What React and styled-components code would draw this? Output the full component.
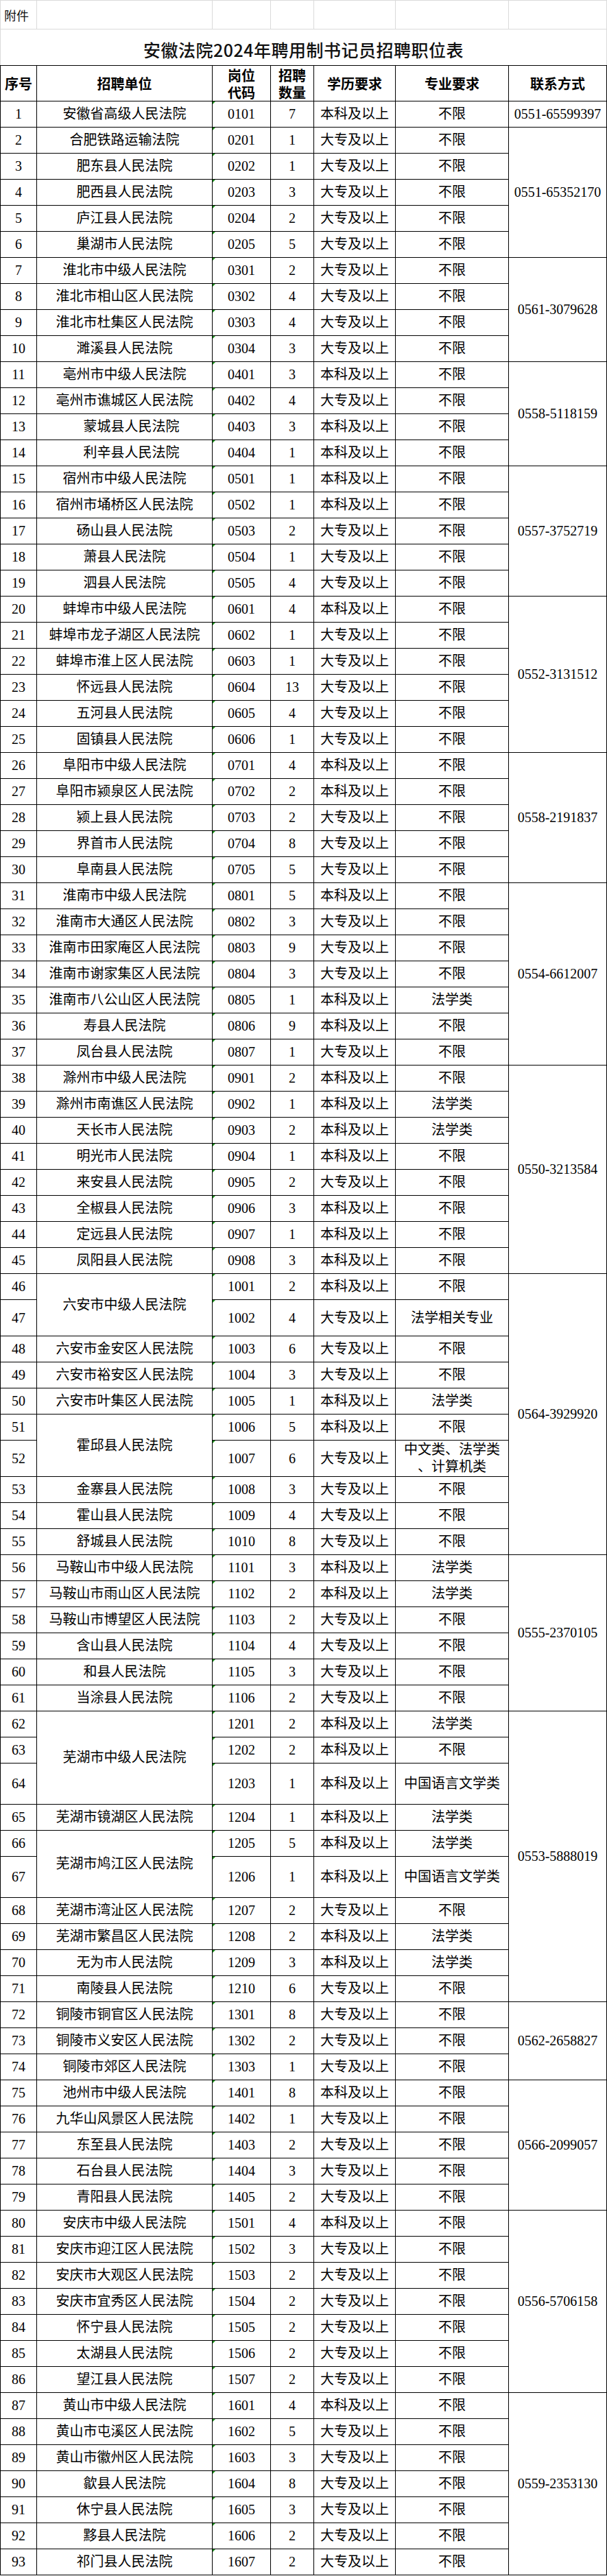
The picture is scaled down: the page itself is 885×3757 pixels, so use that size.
import React from "react";
import styled, { createGlobalStyle, css } from "styled-components";

const GlobalStyle = createGlobalStyle`
  html, body {
    margin: 0;
    padding: 0;
    background: #ffffff;
  }
`;

// column widths, summed to the 885px page
const COLS = [54, 256, 85, 63, 119, 165, 143];

const EDU = { 本: "本科及以上", 大: "大专及以上" };

// [unit, code, count, edu, major] — unit null where the cell above is merged down
const ROWS = [
  ["安徽省高级人民法院", "0101", "7", "本", "不限"],
  ["合肥铁路运输法院", "0201", "1", "大", "不限"],
  ["肥东县人民法院", "0202", "1", "大", "不限"],
  ["肥西县人民法院", "0203", "3", "大", "不限"],
  ["庐江县人民法院", "0204", "2", "大", "不限"],
  ["巢湖市人民法院", "0205", "5", "大", "不限"],
  ["淮北市中级人民法院", "0301", "2", "大", "不限"],
  ["淮北市相山区人民法院", "0302", "4", "大", "不限"],
  ["淮北市杜集区人民法院", "0303", "4", "大", "不限"],
  ["濉溪县人民法院", "0304", "3", "大", "不限"],
  ["亳州市中级人民法院", "0401", "3", "本", "不限"],
  ["亳州市谯城区人民法院", "0402", "4", "大", "不限"],
  ["　蒙城县人民法院", "0403", "3", "本", "不限"],
  ["　利辛县人民法院", "0404", "1", "本", "不限"],
  ["宿州市中级人民法院", "0501", "1", "本", "不限"],
  ["宿州市埇桥区人民法院", "0502", "1", "本", "不限"],
  ["砀山县人民法院", "0503", "2", "大", "不限"],
  ["萧县人民法院", "0504", "1", "大", "不限"],
  ["泗县人民法院", "0505", "4", "大", "不限"],
  ["蚌埠市中级人民法院", "0601", "4", "本", "不限"],
  ["蚌埠市龙子湖区人民法院", "0602", "1", "大", "不限"],
  ["蚌埠市淮上区人民法院", "0603", "1", "大", "不限"],
  ["怀远县人民法院", "0604", "13", "大", "不限"],
  ["五河县人民法院", "0605", "4", "大", "不限"],
  ["固镇县人民法院", "0606", "1", "大", "不限"],
  ["阜阳市中级人民法院", "0701", "4", "本", "不限"],
  ["阜阳市颍泉区人民法院", "0702", "2", "本", "不限"],
  ["颍上县人民法院", "0703", "2", "大", "不限"],
  ["界首市人民法院", "0704", "8", "大", "不限"],
  ["阜南县人民法院", "0705", "5", "大", "不限"],
  ["淮南市中级人民法院", "0801", "5", "本", "不限"],
  ["淮南市大通区人民法院", "0802", "3", "大", "不限"],
  ["淮南市田家庵区人民法院", "0803", "9", "大", "不限"],
  ["淮南市谢家集区人民法院", "0804", "3", "大", "不限"],
  ["淮南市八公山区人民法院", "0805", "1", "本", "法学类"],
  ["寿县人民法院", "0806", "9", "本", "不限"],
  ["凤台县人民法院", "0807", "1", "大", "不限"],
  ["滁州市中级人民法院", "0901", "2", "本", "不限"],
  ["滁州市南谯区人民法院", "0902", "1", "本", "法学类"],
  ["天长市人民法院", "0903", "2", "本", "法学类"],
  ["明光市人民法院", "0904", "1", "本", "不限"],
  ["来安县人民法院", "0905", "2", "大", "不限"],
  ["全椒县人民法院", "0906", "3", "本", "不限"],
  ["定远县人民法院", "0907", "1", "本", "不限"],
  ["凤阳县人民法院", "0908", "3", "本", "不限"],
  ["六安市中级人民法院", "1001", "2", "本", "不限"],
  [null, "1002", "4", "大", "法学相关专业"],
  ["六安市金安区人民法院", "1003", "6", "大", "不限"],
  ["六安市裕安区人民法院", "1004", "3", "大", "不限"],
  ["六安市叶集区人民法院", "1005", "1", "本", "法学类"],
  ["霍邱县人民法院", "1006", "5", "本", "不限"],
  [null, "1007", "6", "大", "中文类、法学类\n、计算机类"],
  ["金寨县人民法院", "1008", "3", "大", "不限"],
  ["霍山县人民法院", "1009", "4", "大", "不限"],
  ["舒城县人民法院", "1010", "8", "大", "不限"],
  ["马鞍山市中级人民法院", "1101", "3", "本", "法学类"],
  ["马鞍山市雨山区人民法院", "1102", "2", "本", "法学类"],
  ["马鞍山市博望区人民法院", "1103", "2", "大", "不限"],
  ["含山县人民法院", "1104", "4", "大", "不限"],
  ["和县人民法院", "1105", "3", "大", "不限"],
  ["当涂县人民法院", "1106", "2", "大", "不限"],
  ["芜湖市中级人民法院", "1201", "2", "本", "法学类"],
  [null, "1202", "2", "本", "不限"],
  [null, "1203", "1", "本", "中国语言文学类"],
  ["芜湖市镜湖区人民法院", "1204", "1", "本", "法学类"],
  ["芜湖市鸠江区人民法院", "1205", "5", "本", "法学类"],
  [null, "1206", "1", "本", "中国语言文学类"],
  ["芜湖市湾沚区人民法院", "1207", "2", "大", "不限"],
  ["芜湖市繁昌区人民法院", "1208", "2", "本", "法学类"],
  ["无为市人民法院", "1209", "3", "本", "法学类"],
  ["南陵县人民法院", "1210", "6", "大", "不限"],
  ["铜陵市铜官区人民法院", "1301", "8", "大", "不限"],
  ["铜陵市义安区人民法院", "1302", "2", "大", "不限"],
  ["铜陵市郊区人民法院", "1303", "1", "大", "不限"],
  ["池州市中级人民法院", "1401", "8", "本", "不限"],
  ["九华山风景区人民法院", "1402", "1", "大", "不限"],
  ["东至县人民法院", "1403", "2", "大", "不限"],
  ["石台县人民法院", "1404", "3", "大", "不限"],
  ["青阳县人民法院", "1405", "2", "大", "不限"],
  ["安庆市中级人民法院", "1501", "4", "本", "不限"],
  ["安庆市迎江区人民法院", "1502", "3", "大", "不限"],
  ["安庆市大观区人民法院", "1503", "2", "大", "不限"],
  ["安庆市宜秀区人民法院", "1504", "2", "大", "不限"],
  ["怀宁县人民法院", "1505", "2", "大", "不限"],
  ["太湖县人民法院", "1506", "2", "大", "不限"],
  ["望江县人民法院", "1507", "2", "大", "不限"],
  ["黄山市中级人民法院", "1601", "4", "本", "不限"],
  ["黄山市屯溪区人民法院", "1602", "5", "大", "不限"],
  ["黄山市徽州区人民法院", "1603", "3", "大", "不限"],
  ["歙县人民法院", "1604", "8", "大", "不限"],
  ["休宁县人民法院", "1605", "3", "大", "不限"],
  ["黟县人民法院", "1606", "2", "大", "不限"],
  ["祁门县人民法院", "1607", "2", "大", "不限"],
];

// merged unit cells: row number -> rows spanned
const UNIT_SPANS = { 46: 2, 51: 2, 62: 3, 66: 2 };

// taller rows
const TALL = { 47: 53, 52: 53, 64: 60, 67: 60 };

// contact column: [first row, rows spanned, phone]
const PHONES = {
  1: [1, "0551-65599397"],
  2: [5, "0551-65352170"],
  7: [4, "0561-3079628"],
  11: [4, "0558-5118159"],
  15: [5, "0557-3752719"],
  20: [6, "0552-3131512"],
  26: [5, "0558-2191837"],
  31: [7, "0554-6612007"],
  38: [8, "0550-3213584"],
  46: [10, "0564-3929920"],
  56: [6, "0555-2370105"],
  62: [10, "0553-5888019"],
  72: [3, "0562-2658827"],
  75: [5, "0566-2099057"],
  80: [7, "0556-5706158"],
  87: [7, "0559-2353130"],
};

const HEADS = ["序号", "招聘单位", "岗位\n代码", "招聘\n数量", "学历要求", "专业要求", "联系方式"];

const rowTemplate = ["43px", "52px", "53px"]
  .concat(ROWS.map((_, i) => `${TALL[i + 1] || 38}px`))
  .join(" ");

// Sheet grid
const Sheet = styled.div`
  display: grid;
  width: 885px;
  grid-template-columns: ${COLS.map((c) => `${c}px`).join(" ")};
  grid-template-rows: ${({ $rows }) => $rows};
  font-family: "Liberation Serif", "Noto Sans CJK SC", serif;
  color: #000;
`;

// Top "附件" row with the faint spreadsheet gridlines
const NoteCell = styled.div`
  box-sizing: border-box;
  display: flex;
  align-items: center;
  padding-left: 5px;
  border-top: 1px solid #dadada;
  border-bottom: 1px solid #dadada;
  border-right: 1px solid #dadada;
  border-left: ${({ $first }) => ($first ? "1px solid #dadada" : "none")};
  font-family: "Noto Sans CJK SC", sans-serif;
  font-size: 18px;
  color: #111;
`;

// Merged title across all columns
const TitleCell = styled.div`
  grid-column: 1 / -1;
  box-sizing: border-box;
  display: flex;
  align-items: center;
  justify-content: center;
  padding-top: 5px;
  border-left: 1px solid #dadada;
  border-right: 1px solid #dadada;
  font-family: "Noto Sans CJK SC", sans-serif;
  font-size: 25px;
  font-weight: 500;
  letter-spacing: 0.5px;
  color: #111;
`;

// Column header cells
const HeadCell = styled.div`
  box-sizing: border-box;
  display: flex;
  align-items: center;
  justify-content: center;
  text-align: center;
  white-space: pre-line;
  border-top: 1px solid #000;
  border-bottom: 1px solid #000;
  border-right: 1px solid #000;
  border-left: ${({ $first }) => ($first ? "1px solid #000" : "none")};
  font-family: "Noto Sans CJK SC", sans-serif;
  font-size: 20px;
  font-weight: 700;
  line-height: 25px;
`;

// Body cells
const Cell = styled.div`
  position: relative;
  box-sizing: border-box;
  display: flex;
  align-items: center;
  justify-content: center;
  text-align: center;
  white-space: pre-line;
  border-bottom: 1px solid #000;
  border-right: 1px solid #000;
  border-left: ${({ $first }) => ($first ? "1px solid #000" : "none")};
  grid-row: ${({ $span }) => ($span ? `span ${$span}` : "auto")};
  font-size: 20px;
  line-height: 25px;

  ${({ $flag }) =>
    $flag &&
    css`
      &::before {
        content: "";
        position: absolute;
        top: 0;
        left: 0;
        border-top: 4px solid #1c8f1c;
        border-right: 4px solid transparent;
      }
    `}
`;

function DataRow({ no, row }) {
  const [unit, code, count, edu, major] = row;
  const phone = PHONES[no];

  return (
    <>
      <Cell $first>{no}</Cell>
      {unit !== null && <Cell $span={UNIT_SPANS[no]}>{unit}</Cell>}
      <Cell $flag>{code}</Cell>
      <Cell>{count}</Cell>
      <Cell>{EDU[edu]}</Cell>
      <Cell>{major}</Cell>
      {phone && <Cell $span={phone[0]}>{phone[1]}</Cell>}
    </>
  );
}

export default function App() {
  return (
    <>
      <GlobalStyle />
      <Sheet $rows={rowTemplate}>
        {COLS.map((_, i) => (
          <NoteCell key={`n${i}`} $first={i === 0}>
            {i === 0 ? "附件" : ""}
          </NoteCell>
        ))}

        <TitleCell>安徽法院2024年聘用制书记员招聘职位表</TitleCell>

        {HEADS.map((h, i) => (
          <HeadCell key={h} $first={i === 0}>
            {h}
          </HeadCell>
        ))}

        {ROWS.map((row, i) => (
          <DataRow key={i} no={i + 1} row={row} />
        ))}
      </Sheet>
    </>
  );
}
